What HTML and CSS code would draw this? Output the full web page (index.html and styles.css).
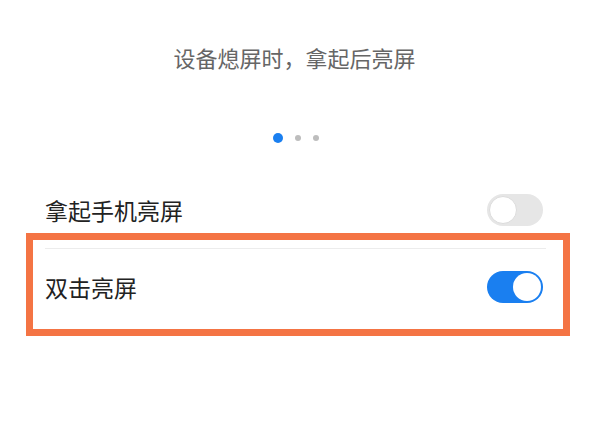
FILE: index.html
```html
<!DOCTYPE html>
<html lang="zh-CN">
<head>
<meta charset="utf-8">
<link rel="stylesheet" href="styles.css">
</head>
<body>
<div class="page">
  <div class="caption">设备熄屏时，拿起后亮屏</div>
  <div class="dots">
    <span class="dot active"></span>
    <span class="dot"></span>
    <span class="dot"></span>
  </div>
  <div class="list">
    <div class="row">
      <span class="label">拿起手机亮屏</span>
      <span class="switch off"><span class="knob"></span></span>
    </div>
    <div class="divider"></div>
    <div class="row">
      <span class="label">双击亮屏</span>
      <span class="switch on"><span class="knob"></span></span>
    </div>
    <div class="highlight"></div>
  </div>
</div>
</body>
</html>
```
FILE: styles.css
```css
html, body {
  margin: 0;
  padding: 0;
  background: #ffffff;
}
.page {
  width: 589px;
  height: 430px;
  font-family: "Noto Sans CJK SC", "Noto Sans", sans-serif;
  overflow: hidden;
}
.caption {
  padding-top: 45px;
  height: 24px;
  line-height: 24px;
  font-size: 22px;
  color: #666666;
  text-align: center;
}
.dots {
  margin-top: 63px;
  height: 12px;
  display: flex;
  align-items: center;
  justify-content: center;
  gap: 12px;
  padding-left: 3px;
}
.dot {
  width: 6px;
  height: 6px;
  border-radius: 50%;
  background: #bdbdbd;
}
.dot.active {
  width: 10px;
  height: 10px;
  background: #1a7ff0;
}
.list {
  position: relative;
  margin-top: 28px;
}
.row {
  height: 76px;
  display: flex;
  align-items: center;
  justify-content: space-between;
  padding: 0 46px 0 45px;
}
.label {
  font-size: 23px;
  color: #222222;
  line-height: 1;
}
.divider {
  height: 1px;
  background: #ececec;
  margin: 0 43px 0 45px;
}
.switch {
  position: relative;
  width: 56px;
  height: 32px;
  border-radius: 16px;
  box-sizing: border-box;
}
.switch.off {
  background: #e6e6e6;
}
.switch.on {
  background: #1a7ff0;
}
.knob {
  position: absolute;
  top: 2px;
  width: 28px;
  height: 28px;
  border-radius: 50%;
  background: #ffffff;
  box-sizing: border-box;
}
.switch.off .knob {
  left: 2px;
  border: 1px solid #dcdcdc;
}
.switch.on .knob {
  right: 2px;
}
.highlight {
  position: absolute;
  left: 26px;
  top: 61px;
  width: 544px;
  height: 103px;
  box-sizing: border-box;
  border: 7px solid #f47444;
  pointer-events: none;
}
```
